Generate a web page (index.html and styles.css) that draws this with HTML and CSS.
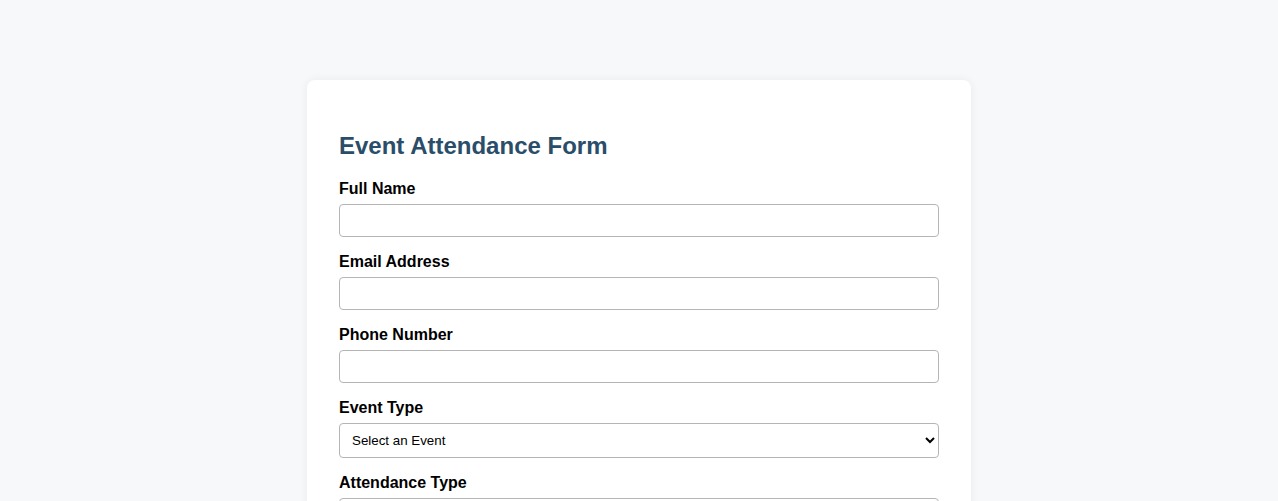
FILE: index.html
```html
<!DOCTYPE html>
<html lang="en">
<head>
  <meta charset="UTF-8" />
  <meta name="viewport" content="width=device-width, initial-scale=1" />
  <title>Event Attendance Form</title>
  <link rel="stylesheet" href="styles.css">
</head>
<body>
  <div class="container">
    <h2>Event Attendance Form</h2>

    <form id="attendanceForm">
      <div class="form-group">
        <label for="fullName">Full Name</label>
        <input type="text" id="fullName" required />
      </div>
      <div class="form-group">
        <label for="email">Email Address</label>
        <input type="email" id="email" required />
      </div>
      <div class="form-group">
        <label for="phone">Phone Number</label>
        <input type="tel" id="phone" />
      </div>
      <div class="form-group">
        <label for="eventType">Event Type</label>
        <select id="eventType" required>
          <option value="">Select an Event</option>
          <option value="conference">Conference</option>
          <option value="workshop">Workshop</option>
          <option value="seminar">Seminar</option>
        </select>
      </div>
      <div class="form-group">
        <label for="attendanceType">Attendance Type</label>
        <select id="attendanceType" required>
          <option value="">Select Attendance Type</option>
          <option value="in-person">In Person</option>
          <option value="virtual">Virtual</option>
        </select>
      </div>
    </form>
  </div>
</body>
</html>
```

FILE: styles.css
```css
* {
  box-sizing: border-box;
}

body {
  margin: 0;
  font-family: "Liberation Sans", Arial, sans-serif;
  background-color: #f7f8fa;
  color: #000;
}

.container {
  max-width: 664px;
  margin: 80px auto;
  background: #fff;
  border-radius: 8px;
  padding: 32px;
  box-shadow: 0 0 10px rgba(0, 0, 0, 0.06);
}

h2 {
  font-size: 24px;
  margin: 20px 0;
  color: #2a4d69;
}

.form-group {
  margin-bottom: 16px;
}

label {
  display: block;
  font-weight: bold;
  font-size: 16px;
  margin-bottom: 6px;
}

input,
select {
  width: 100%;
  height: 33px;
  padding: 8px;
  border: 1px solid #b5b5b5;
  border-radius: 4px;
  font-family: "Liberation Sans", Arial, sans-serif;
  font-size: 14px;
  background-color: #fff;
}

select {
  height: 35px;
  padding: 0 8px;
  font-size: 13.33px;
  color: #000;
}
```
